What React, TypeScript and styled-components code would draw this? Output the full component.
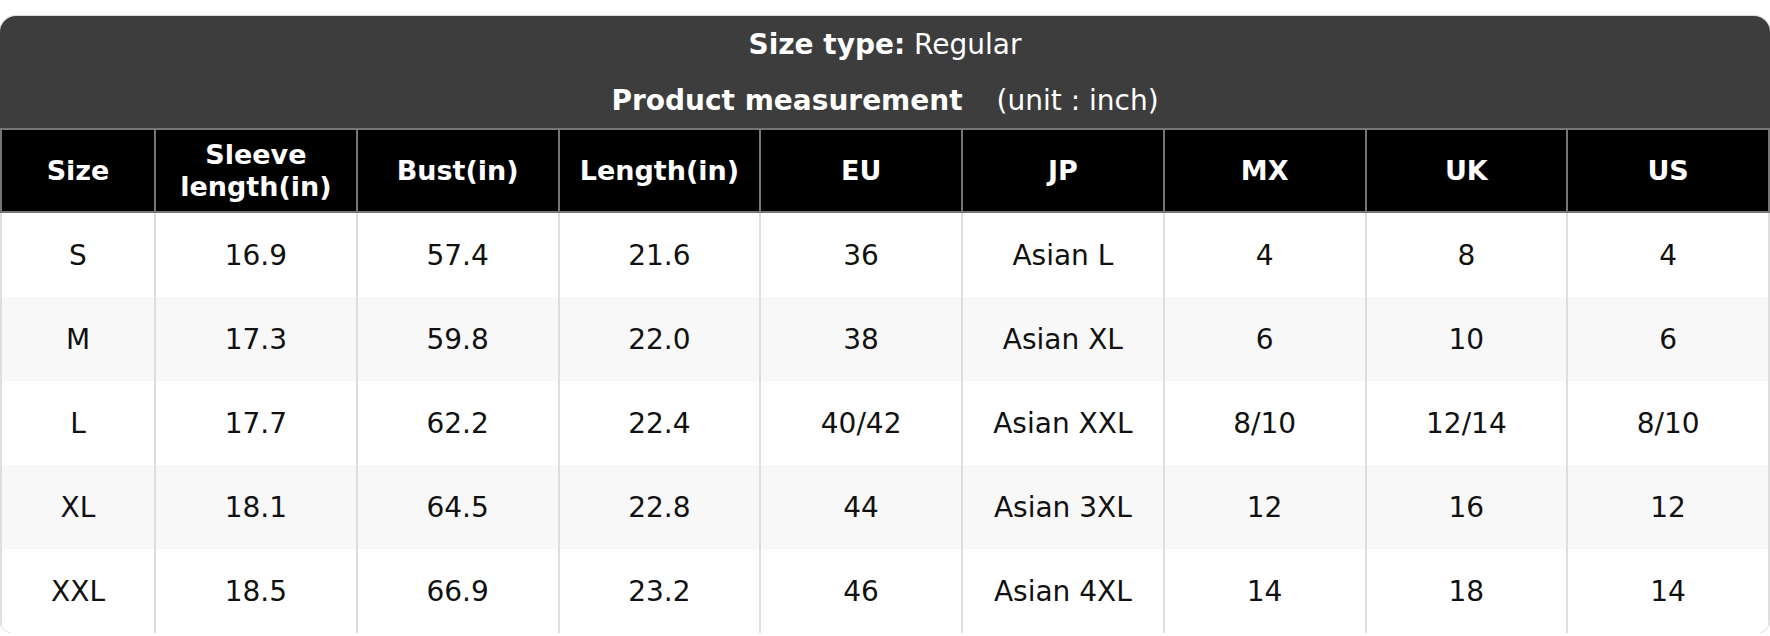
import React from "react";
import styled, { createGlobalStyle } from "styled-components";

const GlobalStyle = createGlobalStyle`
  html, body {
    margin: 0;
    padding: 0;
    background: #ffffff;
  }
  body {
    font-family: "DejaVu Sans", "Liberation Sans", sans-serif;
    color: #111111;
  }
`;

const Page = styled.div`
  padding-top: 16px;
  width: 1770px;
`;

const Card = styled.div`
  border-radius: 16px 16px 14px 14px;
  overflow: hidden;
  background: #ffffff;
  box-shadow: 0 0 0 1px #dcdcdc;
`;

const Caption = styled.div`
  background: #3d3d3d;
  color: #ffffff;
  display: flex;
  flex-direction: column;
`;

const CaptionLine = styled.div`
  height: 56px;
  display: flex;
  align-items: center;
  justify-content: center;
  font-size: 28px;
  white-space: pre;
`;

const Strong = styled.span`
  font-weight: bold;
`;

const Unit = styled.span`
  margin-left: 34px;
`;

const Table = styled.table`
  width: 100%;
  border-collapse: collapse;
  table-layout: fixed;
`;

const HeadCell = styled.th`
  background: #000000;
  color: #ffffff;
  font-size: 27px;
  font-weight: bold;
  height: 81px;
  padding: 0 6px;
  border: 2px solid #767676;
  text-align: center;
  line-height: 1.16;
`;

const Row = styled.tr<{ $alt: boolean }>`
  background: ${(p) => (p.$alt ? "#f8f8f8" : "#ffffff")};
`;

const Cell = styled.td`
  font-size: 28px;
  height: 84px;
  padding: 0;
  border-left: 2px solid #dedede;
  border-right: 2px solid #dedede;
  text-align: center;
  color: #111111;
`;

const columns = [
  "Size",
  "Sleeve length(in)",
  "Bust(in)",
  "Length(in)",
  "EU",
  "JP",
  "MX",
  "UK",
  "US",
];

const rows = [
  ["S", "16.9", "57.4", "21.6", "36", "Asian L", "4", "8", "4"],
  ["M", "17.3", "59.8", "22.0", "38", "Asian XL", "6", "10", "6"],
  ["L", "17.7", "62.2", "22.4", "40/42", "Asian XXL", "8/10", "12/14", "8/10"],
  ["XL", "18.1", "64.5", "22.8", "44", "Asian 3XL", "12", "16", "12"],
  ["XXL", "18.5", "66.9", "23.2", "46", "Asian 4XL", "14", "18", "14"],
];

export default function App() {
  return (
    <Page>
      <GlobalStyle />
      <Card>
        <Caption>
          <CaptionLine>
            <Strong>Size type:</Strong> Regular
          </CaptionLine>
          <CaptionLine>
            <Strong>Product measurement</Strong>
            <Unit>(unit : inch)</Unit>
          </CaptionLine>
        </Caption>
        <Table>
          <colgroup>
            <col style={{ width: 154 }} />
            {columns.slice(1).map((c) => (
              <col key={c} />
            ))}
          </colgroup>
          <thead>
            <tr>
              {columns.map((c) => (
                <HeadCell key={c}>
                  {c === "Sleeve length(in)" ? (
                    <>
                      Sleeve
                      <br />
                      length(in)
                    </>
                  ) : (
                    c
                  )}
                </HeadCell>
              ))}
            </tr>
          </thead>
          <tbody>
            {rows.map((r, i) => (
              <Row key={r[0]} $alt={i % 2 === 1}>
                {r.map((v, j) => (
                  <Cell key={j}>{v}</Cell>
                ))}
              </Row>
            ))}
          </tbody>
        </Table>
      </Card>
    </Page>
  );
}
